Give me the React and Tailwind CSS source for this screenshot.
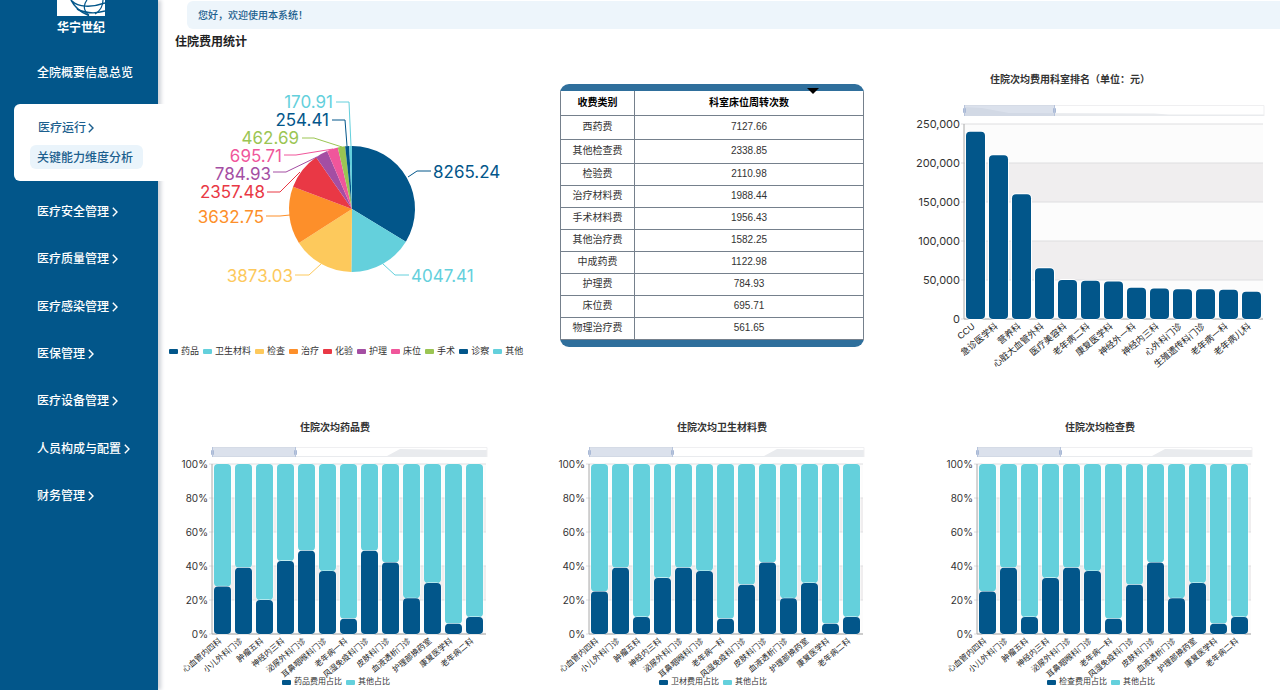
import React from 'react';

const NAVY = '#02568a';
const TEAL = '#64d0dc';

const menu = [
  '医疗安全管理',
  '医疗质量管理',
  '医疗感染管理',
  '医保管理',
  '医疗设备管理',
  '人员构成与配置',
  '财务管理',
];

// line: slice edge -> elbow -> label
const pieData = [
  { name: '药品', value: 8265.24, color: NAVY, line: '250,124 259,118 273,118', x: 275, y: 119, anchor: 'start' },
  { name: '卫生材料', value: 4047.41, color: TEAL, line: '225,211 237,222 251,222', x: 253, y: 223, anchor: 'start' },
  { name: '检查', value: 3873.03, color: '#fdc95c', line: '163,211 151,222 137,222', x: 135, y: 223, anchor: 'end' },
  { name: '治疗', value: 3632.75, color: '#fd8f2a', line: '132,162 122,163 108,163', x: 106, y: 164, anchor: 'end' },
  { name: '化验', value: 2357.48, color: '#e93845', line: '142,119 122,139 109,139', x: 107, y: 139, anchor: 'end' },
  { name: '护理', value: 784.93, color: '#a44ea3', line: '159,104 128,119 115,119', x: 113, y: 121, anchor: 'end' },
  { name: '床位', value: 695.71, color: '#f0569b', line: '175,96 138,102 126,102', x: 124, y: 103, anchor: 'end' },
  { name: '手术', value: 462.69, color: '#9bc553', line: '184,94 156,85 144,85', x: 141, y: 85, anchor: 'end' },
  { name: '诊察', value: 254.41, color: NAVY, line: '189,93 187,67 174,67', x: 171, y: 67, anchor: 'end' },
  { name: '其他', value: 170.91, color: TEAL, line: '193,93 191,49 178,49', x: 175, y: 49, anchor: 'end' },
];

const feeRows = [
  ['西药费', '7127.66'],
  ['其他检查费', '2338.85'],
  ['检验费', '2110.98'],
  ['治疗材料费', '1988.44'],
  ['手术材料费', '1956.43'],
  ['其他治疗费', '1582.25'],
  ['中成药费', '1122.98'],
  ['护理费', '784.93'],
  ['床位费', '695.71'],
  ['物理治疗费', '561.65'],
];

const rankData = [
  ['CCU', 240000],
  ['急诊医学科', 210000],
  ['营养科', 160000],
  ['心脏大血管外科', 65000],
  ['医疗美容科', 50000],
  ['老年病二科', 49000],
  ['康复医学科', 48000],
  ['神经外一科', 40000],
  ['神经内三科', 39000],
  ['心外科门诊', 38000],
  ['生殖遗传科门诊', 38000],
  ['老年病一科', 37500],
  ['老年病儿科', 35000],
];

const depts = [
  '心血管内四科',
  '小儿外科门诊',
  '肿瘤五科',
  '神经内三科',
  '泌尿外科门诊',
  '耳鼻咽喉科门诊',
  '老年病一科',
  '风湿免疫科门诊',
  '皮肤科门诊',
  '血液透析门诊',
  '护理部换药室',
  '康复医学科',
  '老年病二科',
];

const ratioCharts = [
  { title: '住院次均药品费', legend: '药品费用占比', values: [28, 39, 20, 43, 49, 37, 9, 49, 42, 21, 30, 6, 10] },
  { title: '住院次均卫生材料费', legend: '卫材费用占比', values: [25, 39, 10, 33, 39, 37, 9, 29, 42, 21, 30, 6, 10] },
  { title: '住院次均检查费', legend: '检查费用占比', values: [25, 39, 10, 33, 39, 37, 9, 29, 42, 21, 30, 6, 10] },
];

function Chevron() {
  return (
    <svg viewBox="0 0 6 10" className="w-1.5 h-2.5 shrink-0" fill="none" stroke="currentColor" strokeWidth="1.4">
      <path d="M0.8 0.8L5 5L0.8 9.2" />
    </svg>
  );
}

function Logo() {
  return (
    <div className="flex flex-col items-center text-white">
      <svg viewBox="0 0 48 16" className="w-12 h-4">
        <rect width="48" height="16" fill="#fff" />
        <g fill="none" stroke={NAVY}>
          <path d="M14 0C17 6 22 12 32 15.5" strokeWidth="1.6" />
          <path d="M15 1C21 7 34 8 48 3" strokeWidth="1.4" />
          <path d="M20 9C28 13 38 14 48 11" strokeWidth="1.4" />
          <path d="M30 0C26 5 26 10 32 15.5" strokeWidth="1.2" />
          <path d="M46 0C46 6 43 11 38 14" strokeWidth="1.2" />
        </g>
      </svg>
      <span className="text-xs leading-4 mt-1 font-bold">华宁世纪</span>
    </div>
  );
}

function Sidebar() {
  return (
    <aside className="relative w-[158px] shrink-0 bg-[#02568a] text-white text-xs font-medium shadow-[3px_0_4px_#cfd2d8]">
      <div className="pl-1">
        <Logo />
      </div>
      <nav className="mt-[29px]">
        <a href="#overview" className="flex items-center h-4 pl-[37px]">全院概要信息总览</a>

        <div className="mt-[23px] ml-3.5 -mr-2 h-[77px] pt-4 rounded-l-md bg-white text-[#1c5f8e]">
          <button className="flex items-center gap-0.5 h-4 ml-6">
            医疗运行
            <Chevron />
          </button>
          <a href="#ability" className="flex items-center w-[113px] h-6 mt-[9px] ml-4 pt-0.5 pl-[7px] rounded-md bg-[#eaf4fb]">
            关键能力维度分析
          </a>
        </div>

        <ul className="grid grid-rows-7 h-[332px] mt-[7px]">
          {menu.map(item => (
            <li key={item} className="flex items-center pl-[37px]">
              <button className="flex items-center gap-[3px]">
                {item}
                <Chevron />
              </button>
            </li>
          ))}
        </ul>
      </nav>
    </aside>
  );
}

function Legend({ items }) {
  return (
    <ul className="flex gap-1 whitespace-nowrap text-[#333]">
      {items.map(item => (
        <li key={item.name} className="flex items-center gap-[3px]">
          <span className="w-[9px] h-[5px] rounded-[1px]" style={{ backgroundColor: item.color }} />
          {item.name}
        </li>
      ))}
    </ul>
  );
}

const CX = 194;
const CY = 156;
const R = 63;

function PieChart() {
  const total = pieData.reduce((sum, d) => sum + d.value, 0);
  const point = v => {
    const a = (v / total) * Math.PI * 2;
    return `${CX + R * Math.sin(a)} ${CY - R * Math.cos(a)}`;
  };
  let acc = 0;
  const slices = pieData.map(d => {
    const start = acc;
    acc += d.value;
    return { ...d, path: `M${CX} ${CY}L${point(start)}A${R} ${R} 0 0 1 ${point(acc)}Z` };
  });

  return (
    <svg viewBox="0 2 402 286" className="w-full">
      {slices.map(s => (
        <g key={s.name}>
          <path d={s.path} fill={s.color} />
          <polyline points={s.line} fill="none" stroke={s.color} />
          <text
            x={s.x}
            y={s.y}
            fill={s.color}
            textAnchor={s.anchor}
            dominantBaseline="central"
            className="text-[17px] font-[Inter,sans-serif]"
          >
            {s.value}
          </text>
        </g>
      ))}
    </svg>
  );
}

function FeeTable() {
  return (
    <div className="relative mt-[29px] py-[7px] rounded-[9px] overflow-hidden bg-[#2f6f9c]">
      <table className="w-full border-collapse bg-white text-[10px] leading-3 text-center text-[#333]">
        <thead>
          <tr className="h-6 text-black">
            <th className="w-[74px] border border-t-0 border-[#75808c] font-bold">收费类别</th>
            <th className="border border-t-0 border-[#75808c] font-bold">科室床位周转次数</th>
          </tr>
        </thead>
        <tbody>
          {feeRows.map(([name, value], i) => (
            <tr key={name} className={i < 2 ? 'h-6' : 'h-[22px]'}>
              <td className="border border-[#75808c]">{name}</td>
              <td className="border border-[#75808c]">{value}</td>
            </tr>
          ))}
        </tbody>
      </table>
      <span className="absolute top-1 right-[45px] border-x-[6px] border-t-[6px] border-x-transparent border-t-black" />
    </div>
  );
}

/* Zoom bar above each chart */
function DataZoom({ x, y, width, height, selected, shadow }) {
  return (
    <g>
      <rect x={x} y={y} width={width} height={height} fill="#fff" />
      <path d={shadow} fill="#e9ebee" />
      <path d={`M${x} ${y + 0.5}H${x + width}V${y + height}`} fill="none" stroke="#efeff1" />
      <rect x={x} y={y} width={selected} height={height} fill="#c3cde0" opacity="0.6" />
      <rect x={x - 1} y={y + 3} width="3" height="5" rx="1" fill="#a9b9d6" />
      <rect x={x + selected - 1} y={y + 3} width="3" height="5" rx="1" fill="#a9b9d6" />
      <path d={`M${x + 0.5} ${y}v${height}M${x + selected + 0.5} ${y}v${height}`} stroke="#b7c4dc" />
    </g>
  );
}

/* Bands, grid lines, y labels and rotated x labels */
function Axes({ x, top, width, step, yLabels, xLabels, pitch, yClass, xClass }) {
  const bottom = top + step * (yLabels.length - 1);
  return (
    <g>
      {yLabels.slice(1).map((label, i) => (
        <rect key={label} x={x} y={top + i * step} width={width} height={step} fill={i % 2 ? '#f0eeef' : '#fcfcfc'} />
      ))}
      {yLabels.map((label, i) => (
        <g key={label}>
          <path d={`M${x - 3} ${top + i * step}H${x + width}`} stroke="#dedee0" />
          <text x={x - 4} y={top + i * step} textAnchor="end" dominantBaseline="central" fill="#333" className={yClass}>
            {label}
          </text>
        </g>
      ))}
      <path d={`M${x} ${top}V${bottom}H${x + width}`} fill="none" stroke="#aaa" />
      {xLabels.map((label, i) => (
        <text
          key={label}
          transform={`translate(${x + i * pitch + pitch / 2 - 2} ${bottom + 6}) rotate(-40)`}
          textAnchor="end"
          dominantBaseline="central"
          fill="#222"
          className={xClass}
        >
          {label}
        </text>
      ))}
    </g>
  );
}

function RankChart() {
  return (
    <div className="pt-4">
      <h3 className="text-[10px] leading-[18px] font-bold text-[#333] pl-[126px]">住院次均费用科室排名（单位：元）</h3>
      <svg viewBox="0 2 416 298" className="w-full">
        <DataZoom
          x={100}
          y={18}
          width={300}
          height={11}
          selected={90}
          shadow="M100 20L118 21L145 26L290 26.5L305 27.5H400V29H100Z"
        />
        <Axes
          x={100}
          top={37}
          width={299}
          step={39}
          pitch={23}
          yLabels={['250,000', '200,000', '150,000', '100,000', '50,000', '0']}
          xLabels={rankData.map(d => d[0])}
          yClass="text-[11px] font-[Inter,sans-serif]"
          xClass="text-[9px]"
        />
        {rankData.map(([name, value], i) => {
          const h = (value / 250000) * 195;
          return (
            <rect
              key={name}
              x={102 + i * 23}
              y={232 - h}
              width="19"
              height={h}
              rx="4"
              fill={NAVY}
              stroke="#fff"
              strokeWidth="2"
              paintOrder="stroke"
            />
          );
        })}
      </svg>
    </div>
  );
}

function RatioChart({ title, legend, values }) {
  const top = 29;
  const height = 170;
  return (
    <div>
      <h3 className="text-[10px] leading-[18px] font-bold text-[#333] pl-[142px]">{title}</h3>
      <svg viewBox="0 2 357 237" preserveAspectRatio="xMinYMin meet" className="w-full h-[237px] overflow-visible">
        <DataZoom
          x={54}
          y={12}
          width={275}
          height={10}
          selected={83}
          shadow="M54 21H229L242 14L300 15H329V22H54Z"
        />
        <Axes
          x={54}
          top={top}
          width={274}
          step={34}
          pitch={21}
          yLabels={['100%', '80%', '60%', '40%', '20%', '0%']}
          xLabels={depts}
          yClass="text-[10px] font-[Inter,sans-serif]"
          xClass="text-[8px]"
        />
        {values.map((v, i) => {
          const h = (v / 100) * height;
          const x = 56 + i * 21;
          return (
            <g key={depts[i]} stroke="#fff" strokeWidth="1" paintOrder="stroke">
              <rect x={x} y={top} width="17" height={height - h} rx="4" fill={TEAL} />
              <rect x={x} y={top + height - h} width="17" height={h} rx="4" fill={NAVY} />
            </g>
          );
        })}
      </svg>
      <div className="pl-[124px] text-[8px] leading-4">
        <Legend items={[{ name: legend, color: NAVY }, { name: '其他占比', color: TEAL }]} />
      </div>
    </div>
  );
}

export default function App() {
  return (
    <div className="flex min-h-screen bg-white font-['Liberation_Sans','Noto_Sans_CJK_SC',sans-serif]">
      <Sidebar />

      <main className="flex-1 min-w-0">
        <p className="mt-px ml-[29px] h-7 pl-[11px] flex items-center rounded-l-md bg-[#edf5fb] text-[10px] font-medium text-[#1c5f8e]">
          您好，欢迎使用本系统！
        </p>
        <h2 className="pl-[17px] text-xs leading-[26px] font-bold text-[#222]">住院费用统计</h2>

        <section className="grid grid-cols-[402fr_304fr_416fr] items-start">
          <div>
            <PieChart />
            <div className="pl-[11px] text-[9px] leading-5">
              <Legend items={pieData} />
            </div>
          </div>
          <FeeTable />
          <RankChart />
        </section>

        <section className="grid grid-cols-[377fr_388fr_357fr] mt-8">
          {ratioCharts.map(chart => (
            <RatioChart key={chart.title} {...chart} />
          ))}
        </section>
      </main>
    </div>
  );
}
